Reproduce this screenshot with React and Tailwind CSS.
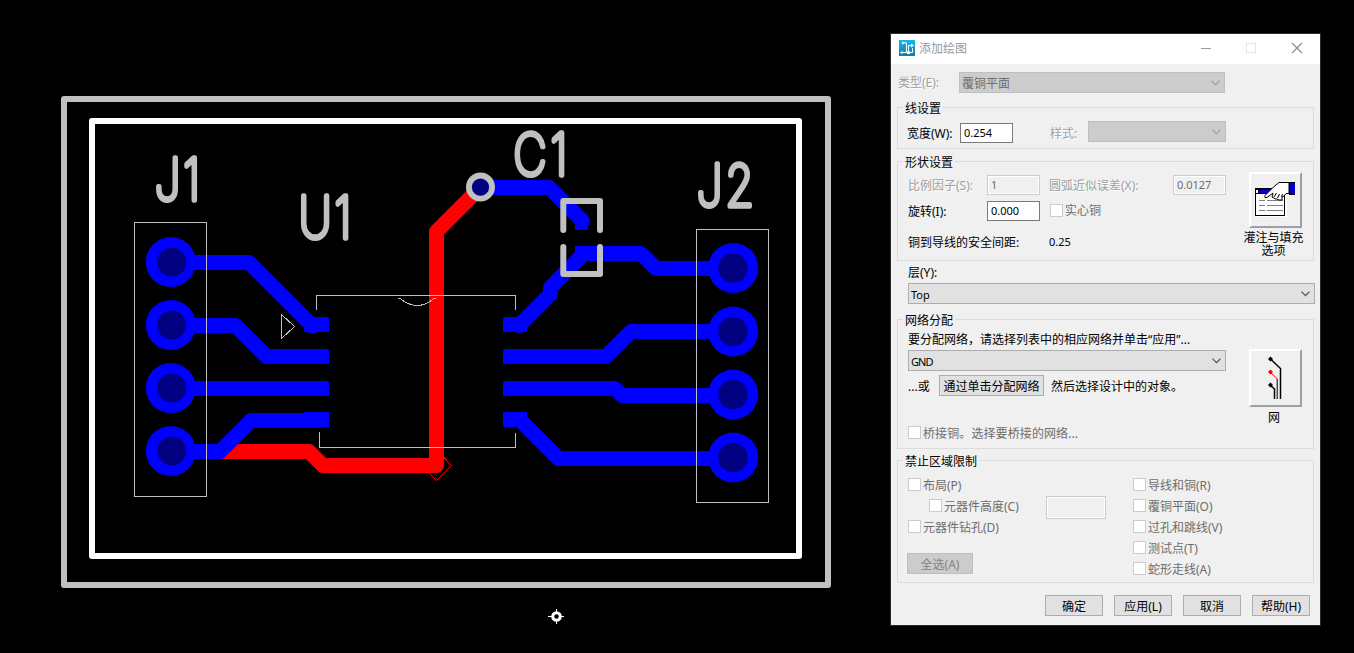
import clsx from "clsx";

const SILK = "#c0c0c0";

const LEFT_PADS = [262, 325, 388, 451];
const RIGHT_PADS = [268, 331.5, 394.5, 457.5];

const TOP_TRACES = [
  "M171 262.5H249L312 325.5H316",
  "M171 325.5H235.5L266.5 356.5H329",
  "M171 388.5H329",
  "M171 451.5H220L251 420.5H320",
  "M480 187.5H549L582.5 221",
  "M733 268.5H656L641 253.5H584L550.5 287.5V294L519 325.5",
  "M503 356.5H606L631 331.5H733",
  "M503 388.5H615L622 395.5H733",
  "M520.5 420.5L558.5 458.5H733",
];

// x is per glyph, in the 0.8-condensed text space
const REFDES = [
  { name: "J1", x: "193.5 229", y: 200.5 },
  { name: "U1", x: "373.5 418", y: 238.5 },
  { name: "C1", x: "642 688", y: 175.5 },
  { name: "J2", x: "871 907", y: 206.5 },
];

function Board() {
  return (
    <svg width="890" height="653" viewBox="0 0 890 653" className="block shrink-0">
      {/* board outline + keepout */}
      <g fill="none" strokeWidth="6" strokeLinejoin="round">
        <rect x="64" y="99" width="764" height="486" stroke={SILK} />
        <rect x="92" y="121" width="707" height="435" stroke="#fff" />
      </g>

      {/* bottom copper */}
      <path
        d="M222 451.5H309L323 465.5H436.5V231.5L480.5 187.5"
        fill="none" stroke="#f00" strokeWidth="15" strokeLinejoin="round" strokeLinecap="round"
      />
      <path d="M444 457.5L451.5 465.5L436.5 480.5L429 473" fill="none" stroke="#f00" shapeRendering="crispEdges" />

      {/* top copper */}
      <g fill="none" stroke="#00f" strokeWidth="15" strokeLinejoin="round">
        {TOP_TRACES.map(d => <path key={d} d={d} />)}
      </g>
      <g fill="#00f">
        <rect x="304" y="317" width="25" height="15" />
        <circle cx="314" cy="325.5" r="7.5" />
        <rect x="304" y="412" width="25" height="15" />
        <rect x="503" y="317" width="24" height="15" />
        <circle cx="519" cy="325.5" r="7.5" />
        <rect x="503" y="412" width="24" height="15" />
        <circle cx="582.5" cy="221.5" r="7.5" />
        <rect x="575" y="219" width="13" height="11" />
        <rect x="575" y="246" width="14" height="10" />
        {LEFT_PADS.map(y => <circle key={y} cx="170.8" cy={y} r="25" />)}
        {RIGHT_PADS.map(y => <circle key={y} cx="733.2" cy={y} r="25" />)}
      </g>
      <g fill="#000080">
        {LEFT_PADS.map(y => <circle key={y} cx="171.7" cy={y} r="14.6" />)}
        {RIGHT_PADS.map(y => <circle key={y} cx="733" cy={y} r="14.8" />)}
      </g>

      {/* via */}
      <circle cx="480.5" cy="187" r="14.5" fill={SILK} />
      <circle cx="480.5" cy="187.2" r="8.6" fill="#000080" />

      {/* silkscreen */}
      <g fill="none" stroke={SILK} shapeRendering="crispEdges">
        <rect x="134.5" y="222.5" width="72" height="274" />
        <rect x="696.5" y="229.5" width="72" height="273" />
        <path d="M316.5 310V295.5H515.5V310M319.5 432V447.5H515.5V433" />
        <path d="M398 298.5H400Q417.5 312.5 434 298.5H436" />
        <path d="M281.5 314.5L294.5 326.5L281.5 338.5Z" />
      </g>
      <path
        d="M563.3 230V201H600V230M563.3 247V274H600V247"
        fill="none" stroke={SILK} strokeWidth="6" strokeLinejoin="round" strokeLinecap="round"
      />
      <g
        transform="scale(0.8 1)"
        fill={SILK} stroke={SILK} strokeWidth="5.6" strokeLinejoin="round"
        className="font-[Inter,'Liberation_Sans',sans-serif] text-[57px] font-thin"
      >
        {REFDES.map(r => <text key={r.name} x={r.x} y={r.y}>{r.name}</text>)}
      </g>

      {/* origin */}
      <path d="M548 616.5H564M556.5 609V624" stroke="#fff" />
      <circle cx="556.5" cy="616.5" r="3.8" fill="#000" stroke="#fff" strokeWidth="3" />
    </svg>
  );
}

function AppIcon() {
  return (
    <svg width="16" height="16" viewBox="0 0 16 16">
      <defs>
        <linearGradient id="appIcon" x1="0" y1="0" x2="0" y2="1">
          <stop offset="0" stopColor="#18b6ee" />
          <stop offset="1" stopColor="#0a7fb0" />
        </linearGradient>
      </defs>
      <rect width="16" height="16" fill="url(#appIcon)" />
      <path d="M4.5 2.8H7.5V12.5H2.5M9.5 12V5.5H13M9.5 12.5H13.5V8" fill="none" stroke="#fff" />
      <path d="M3 1.5L5.8 2.8L3 4.5ZM1 12.5L3.5 10.8V14.2ZM8 11.2H11V14H8ZM12 3.5L15 5.5L12 7.5Z" fill="#fff" />
    </svg>
  );
}

function FloodIcon() {
  return (
    <svg width="41" height="36" viewBox="0 0 41 36" shapeRendering="crispEdges" className="mb-[3px]">
      <rect x="1" y="8" width="31" height="28" fill="#fff" />
      <rect x="0.5" y="7.5" width="29" height="27" fill="#fff" stroke="#000" />
      <rect x="4" y="9" width="12" height="3" fill="#0000e0" />
      <path d="M1 8.5H20M1 12.5H14M3.5 8V12M29.5 13V35" stroke="#000" fill="none" />
      <path d="M4 19.5H10M12 19.5H28M4 24.5H10M12 24.5H28M4 29.5H10M12 29.5H28" stroke="#808080" />
      <path d="M4 17.5H5M10 18.5H11M20 20.5H21M4 26.5H5M12 26.5H13M20 26.5H21M27 26.5H28M10 29.5H11" stroke="#ff0" />
      <path
        d="M34 1.5H24L18.5 6L10 14.5V16.5H12L18 12L17 16L19 17L20 18H22L24 19H27V16L29 15L31 12.5H34Z"
        fill="#fff" stroke="#000" shapeRendering="auto"
      />
      <path d="M19 16L21.5 12M22.5 17L24.5 13M26.5 16L27.5 13" stroke="#000" fill="none" shapeRendering="auto" />
      <rect x="34" y="1" width="6" height="13" fill="#0000c8" />
      <path d="M34.5 1V14M34 1.5H40M34 13.5H40" stroke="#000" fill="none" />
    </svg>
  );
}

function NetIcon() {
  return (
    <svg width="16" height="44" viewBox="0 0 16 44" className="ml-px">
      <path d="M3 3.5L12.5 12.5V43" fill="none" stroke="#000" strokeWidth="1.5" />
      <path d="M8.5 22V43" stroke="#a0a0a0" />
      <path d="M2.5 16.5L9.5 23V43" fill="none" stroke="#f00" />
      <path d="M2.5 29.5L6.5 33V43" fill="none" stroke="#000" strokeWidth="1.5" />
      <path d="M0 3L2.5 0.5L5 3L2.5 5.5Z" />
      <path d="M0 16L2.5 13.5L5 16L2.5 18.5Z" fill="#f00" />
      <path d="M0 29L2.5 26.5L5 29L2.5 31.5Z" />
    </svg>
  );
}

function Chevron({ className }) {
  return (
    <svg width="9" height="6" viewBox="0 0 9 6" className={clsx("shrink-0", className)}>
      <path d="M0.5 0.7L4.5 4.7L8.5 0.7" fill="none" stroke="currentColor" strokeWidth="1.2" />
    </svg>
  );
}

function Select({ value, disabled, className }) {
  return (
    <div className={clsx(
      "flex h-[21px] shrink-0 items-center justify-between border pr-[4px] pl-[2px]",
      disabled ? "border-[#bfbfbf] bg-[#cccccc] text-[#6d6d6d]" : "border-[#adadad] bg-[#e1e1e1] text-black",
      className
    )}>
      <span className="pt-[2px]">{value}</span>
      <Chevron className={disabled ? "text-[#a0a0a0]" : "text-[#505050]"} />
    </div>
  );
}

function Input({ value, disabled, className }) {
  return (
    <div className={clsx(
      "flex h-5 w-[53px] shrink-0 items-center border pl-[3px] text-[11px]",
      disabled ? "border-[#cccccc] bg-[#f0f0f0] text-[#6d6d6d] shadow-[inset_0_0_0_1px_#fff]" : "border-[#7a7a7a] bg-white text-black",
      className
    )}>{value}</div>
  );
}

function Check({ label, className }) {
  return (
    <div className={clsx("flex h-[21px] items-center gap-[2px] text-[#6d6d6d]", className)}>
      <span className="size-[13px] shrink-0 border border-[#cccccc] bg-white" />
      <span className="pt-[2px]">{label}</span>
    </div>
  );
}

function Button({ children, disabled, className }) {
  return (
    <button className={clsx(
      "flex h-[21px] shrink-0 items-center justify-center border pt-[2px]",
      disabled ? "border-[#bfbfbf] bg-[#cccccc] text-[#838383]" : "border-[#adadad] bg-[#e1e1e1] text-black",
      className
    )}>{children}</button>
  );
}

function Group({ title, className, children }) {
  return (
    <section className={clsx("mx-[6px] border border-[#dcdcdc]", className)}>
      <div className="-mt-[8px] ml-[5px] h-4 w-fit bg-[#f0f0f0] px-[2px] leading-[18px]">{title}</div>
      {children}
    </section>
  );
}

function Label({ children, disabled, className }) {
  return (
    <span className={clsx(
      "shrink-0 pt-px",
      disabled && "text-[#a0a0a0] [text-shadow:1px_1px_0_#fff]",
      className
    )}>{children}</span>
  );
}

function BigButton({ children, className }) {
  return (
    <button className={clsx(
      "flex w-[53px] items-center justify-center border-2 border-t-white border-l-white border-r-[#a0a0a0] border-b-[#a0a0a0] bg-[#f0f0f0]",
      className
    )}>{children}</button>
  );
}

function DraftingDialog() {
  return (
    <div className="mt-[33px] flex h-[593px] w-[431px] shrink-0 flex-col border border-[#2b2b2b] bg-[#f0f0f0]">
      {/* title bar */}
      <div className="flex h-[30px] shrink-0 items-center bg-white pr-[17px] pl-2 text-[#999999]">
        <span className="mb-[2px]"><AppIcon /></span>
        <span className="ml-[4px] flex-1">添加绘图</span>
        <svg width="102" height="12" viewBox="0 0 102 12" fill="none" className="-mt-[2px]">
          <path d="M0 6.5H10" stroke="#999" />
          <rect x="45.5" y="1.5" width="9" height="9" stroke="#e6e6e6" />
          <path d="M91 1L101 11M101 1L91 11" stroke="#888" strokeWidth="1.1" />
        </svg>
      </div>

      <div className="mt-[8px] flex h-[21px] shrink-0 items-center pl-[7px]">
        <Label disabled className="w-[61px] pt-[3px]">类型(E):</Label>
        <Select disabled value="覆铜平面" className="w-[266px]" />
      </div>

      <Group title="线设置" className="mt-[14px] h-[42px]">
        <div className="mt-[6px] flex h-[22px] items-center pl-[9px]">
          <Label className="w-[53px]">宽度(W):</Label>
          <Input value="0.254" />
          <Label disabled className="ml-[37px] w-[38px]">样式:</Label>
          <Select disabled value="" className="mb-[3px] w-[138px]" />
        </div>
      </Group>

      <Group title="形状设置" className="mt-[12px] h-[100px]">
        <div className="flex">
          <div className="mt-[5px] w-[328px] pl-[10px]">
            <div className="flex h-5 items-center">
              <Label disabled className="w-[79px]">比例因子(S):</Label>
              <Input disabled value="1" />
              <Label disabled className="ml-[9px] w-[124px]">圆弧近似误差(X):</Label>
              <Input disabled value="0.0127" />
            </div>
            <div className="mt-[6px] flex h-5 items-center">
              <Label className="w-[79px]">旋转(I):</Label>
              <Input value="0.000" />
              <Check label="实心铜" className="ml-[10px] -mt-[2px]" />
            </div>
            <div className="mt-[11px] flex h-5 items-center">
              <Label className="w-[141px]">铜到导线的安全间距:</Label>
              <span className="text-[11px]">0.25</span>
            </div>
          </div>
          <div className="mt-[2px] ml-[12px] flex w-[73px] flex-col items-center">
            <BigButton className="ml-px h-[56px]"><FloodIcon /></BigButton>
            <div className="mt-[3px] pr-[2px] text-center leading-[13px]">灌注与填充<br />选项</div>
          </div>
        </div>
      </Group>

      <div className="mt-[3px] h-[19px] shrink-0 pl-[17px] leading-[18px]">层(Y):</div>
      <Select value="Top" className="ml-[17px] w-[407px] text-[11px]" />

      <Group title="网络分配" className="mt-[15px] h-[130px]">
        <div className="flex">
          <div className="w-[328px] pl-[10px]">
            <div className="mt-[4px] h-[18px] leading-4">要分配网络，请选择列表中的相应网络并单击“应用”...</div>
            <Select value="GND" className="w-[318px] text-[11px] tracking-[-0.9px]" />
            <div className="mt-[4px] flex h-[21px] items-center">
              <span className="w-[31px] pt-[2px]">...或</span>
              <Button className="w-[105px]">通过单击分配网络</Button>
              <span className="ml-[7px] pt-[2px]">然后选择设计中的对象。</span>
            </div>
            <Check label="桥接铜。选择要桥接的网络..." className="mt-[26px] tracking-[0.1px]" />
          </div>
          <div className="mt-[21px] ml-[12px] flex w-[73px] flex-col items-center">
            <BigButton className="ml-px h-[58px]"><NetIcon /></BigButton>
            <div className="mt-[2px] pr-px leading-[18px]">网</div>
          </div>
        </div>
      </Group>

      <Group title="禁止区域限制" className="mt-[11px] h-[123px]">
        <div className="mt-[5px] flex pl-[10px]">
          <div className="w-[138px]">
            <Check label="布局(P)" />
            <Check label="元器件高度(C)" className="ml-[21px]" />
            <Check label="元器件钻孔(D)" />
            <Button disabled className="mt-[16px] -ml-px w-[66px]">全选(A)</Button>
          </div>
          <Input disabled value="" className="mt-[22px] h-[23px] w-[60px]" />
          <div className="ml-[27px]">
            <Check label="导线和铜(R)" />
            <Check label="覆铜平面(O)" />
            <Check label="过孔和跳线(V)" />
            <Check label="测试点(T)" />
            <Check label="蛇形走线(A)" />
          </div>
        </div>
      </Group>

      <div className="mt-[12px] flex justify-end gap-[11px] pr-[10px]">
        {["确定", "应用(L)", "取消", "帮助(H)"].map(t => (
          <Button key={t} className="w-[58px]">{t}</Button>
        ))}
      </div>
    </div>
  );
}

export default function App() {
  return (
    <div className="flex h-[653px] w-[1354px] overflow-hidden bg-black font-['Noto_Sans','Noto_Sans_CJK_SC',sans-serif] text-[12px] leading-4 whitespace-nowrap text-black">
      <Board />
      <DraftingDialog />
    </div>
  );
}
